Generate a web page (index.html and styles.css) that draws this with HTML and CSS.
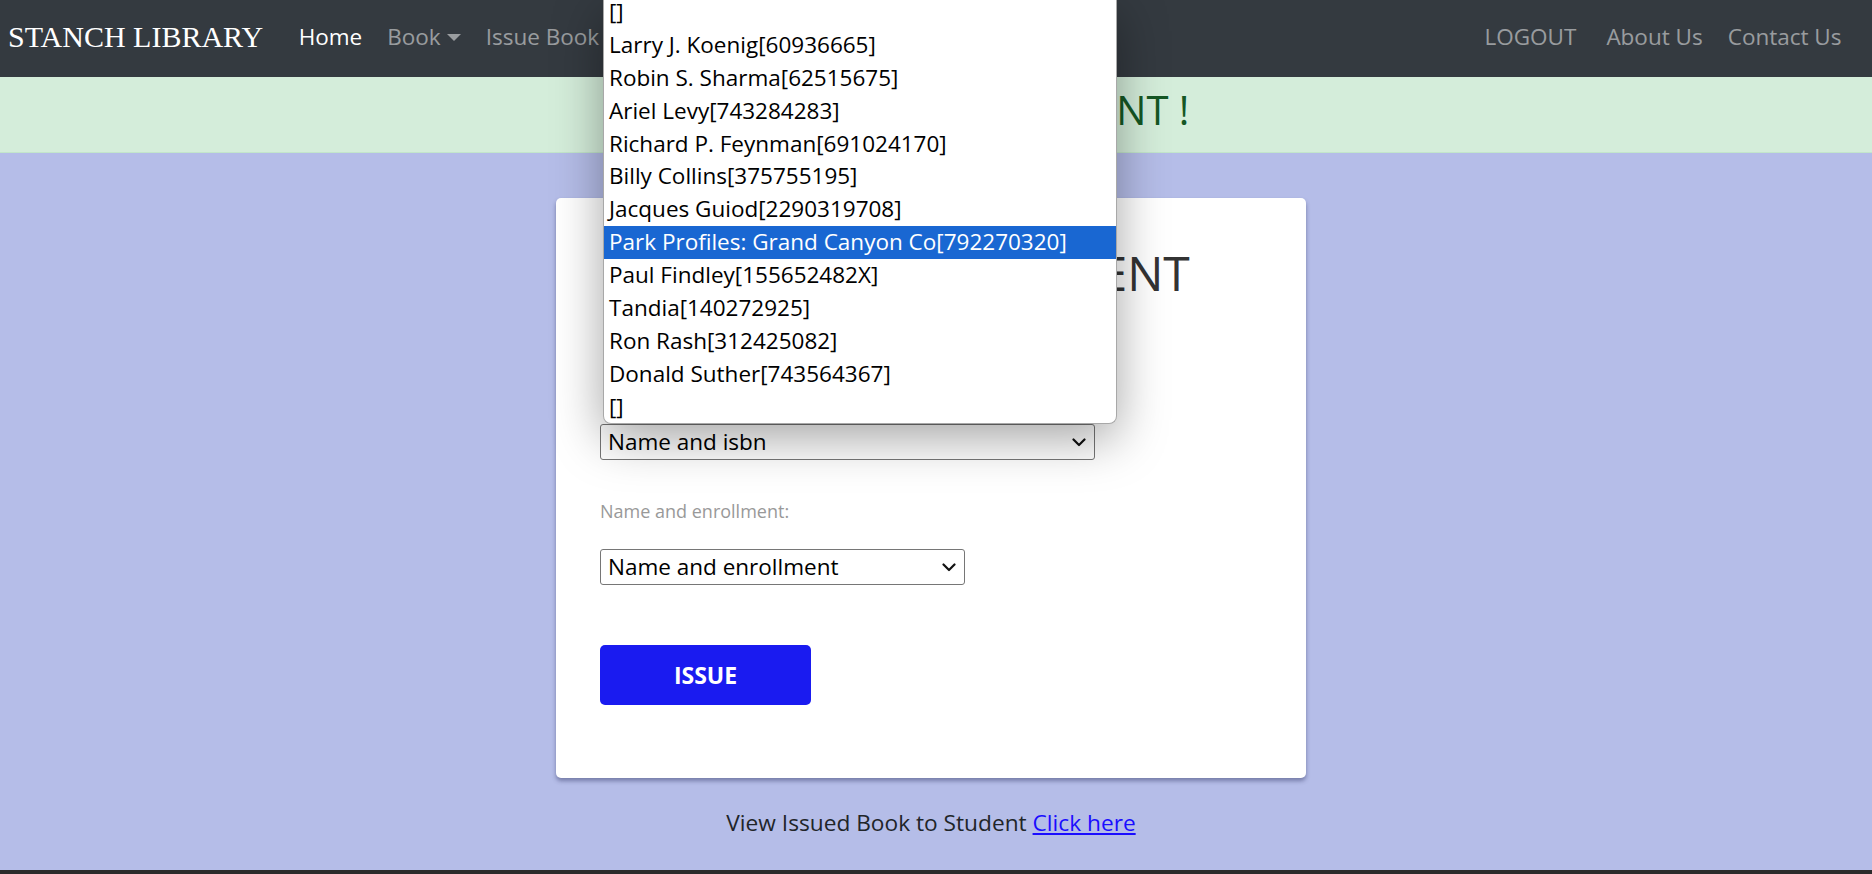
FILE: index.html
```html
<!DOCTYPE html>
<html lang="en">
<head>
<meta charset="utf-8">
<title>Issue Book to Student</title>
<link rel="stylesheet" href="styles.css">
</head>
<body>
<nav class="navbar">
  <a class="brand" href="#">STANCH LIBRARY</a>
  <ul class="nav nav-left">
    <li><a class="nav-link active" href="#">Home</a></li>
    <li><a class="nav-link" href="#">Book<span class="caret"></span></a></li>
    <li><a class="nav-link" href="#">Issue Book</a></li>
  </ul>
  <ul class="nav nav-right">
    <li><a class="nav-link logout" href="#">LOGOUT</a></li>
    <li><a class="nav-link" href="#">About Us</a></li>
    <li><a class="nav-link" href="#">Contact Us</a></li>
  </ul>
</nav>

<div class="banner">
  <h1 class="banner-title">ISSUE BOOK TO STUDENT !</h1>
</div>

<main class="main">
  <div class="card">
    <h2 class="card-title">ISSUE BOOK TO STUDENT</h2>
    <div class="form">
      <div class="select-wrap">
        <div class="select select-wide">
          <span class="select-text">Name and isbn</span>
          <svg class="chevron" width="14" height="9" viewBox="0 0 14 9"><path d="M1.5 1.5 L7 7 L12.5 1.5" fill="none" stroke="#111" stroke-width="2.2" stroke-linecap="round" stroke-linejoin="round"/></svg>
        </div>
        <div class="popup">
          <ul class="options">
            <li class="option">[]</li>
            <li class="option">Larry J. Koenig[60936665]</li>
            <li class="option">Robin S. Sharma[62515675]</li>
            <li class="option">Ariel Levy[743284283]</li>
            <li class="option">Richard P. Feynman[691024170]</li>
            <li class="option">Billy Collins[375755195]</li>
            <li class="option">Jacques Guiod[2290319708]</li>
            <li class="option selected">Park Profiles: Grand Canyon Co[792270320]</li>
            <li class="option">Paul Findley[155652482X]</li>
            <li class="option">Tandia[140272925]</li>
            <li class="option">Ron Rash[312425082]</li>
            <li class="option">Donald Suther[743564367]</li>
            <li class="option">[]</li>
          </ul>
        </div>
      </div>
      <label class="label">Name and enrollment:</label>
      <div class="select select-narrow">
        <span class="select-text">Name and enrollment</span>
        <svg class="chevron" width="14" height="9" viewBox="0 0 14 9"><path d="M1.5 1.5 L7 7 L12.5 1.5" fill="none" stroke="#111" stroke-width="2.2" stroke-linecap="round" stroke-linejoin="round"/></svg>
      </div>
      <button class="btn-issue" type="button">ISSUE</button>
    </div>
  </div>
  <p class="view-link">View Issued Book to Student <a href="#">Click here</a></p>
</main>
<div class="bottom-bar"></div>
</body>
</html>
```

FILE: styles.css
```css
* { box-sizing: border-box; }

html, body {
  margin: 0;
  padding: 0;
  overflow: hidden;
}

body {
  font-family: "Open Sans", "Noto Sans", sans-serif;
  color: #212529;
  background: #b5bde8;
}

/* NAVBAR */
.navbar {
  height: 77px;
  background: #343a40;
  display: flex;
  align-items: center;
  padding: 0 18px 4px 8px;
}

.brand {
  font-family: "Liberation Serif", "Times New Roman", serif;
  font-size: 30px;
  color: #fff;
  text-decoration: none;
  margin-right: 23px;
  line-height: 1;
}

.nav {
  list-style: none;
  margin: 0;
  padding: 0;
  display: flex;
  align-items: center;
}

.nav-right {
  margin-left: auto;
}

.nav-link {
  display: block;
  font-size: 22.5px;
  line-height: 1.5;
  padding: 0 12.5px;
  color: rgba(255, 255, 255, 0.5);
  text-decoration: none;
}

.nav-link.active {
  color: #fff;
}

.nav-link.logout {
  margin-right: 5px;
}

.caret {
  display: inline-block;
  margin-left: 6px;
  vertical-align: 4px;
  border-top: 7px solid rgba(255, 255, 255, 0.5);
  border-left: 7px solid transparent;
  border-right: 7px solid transparent;
}

/* BANNER */
.banner {
  height: 76px;
  background: #d4edda;
  border-bottom: 1px solid #c3e6cb;
  padding: 9px 0 0 6px;
}

.banner-title {
  margin: 0;
  text-align: center;
  font-size: 40px;
  line-height: 48px;
  font-weight: 400;
  color: #155724;
}

/* MAIN */
.main {
  height: 717px;
  padding: 45px 10px 0 0;
}

.card {
  width: 750px;
  margin: 0 auto;
  background: #fff;
  border-radius: 5px;
  box-shadow: 0 3px 4px rgba(40, 45, 90, 0.45);
  padding: 46px 44px 73px;
}

.card-title {
  margin: 0;
  font-size: 48px;
  line-height: 58px;
  font-weight: 500;
  color: #333;
  padding-left: 14px;
}

.form {
  display: flex;
  flex-direction: column;
  align-items: flex-start;
}

.label {
  display: block;
  margin-top: 37.5px;
  font-size: 18px;
  line-height: 27px;
  color: #999;
}

.select-wrap {
  position: relative;
  margin-top: 122px;
}

.select {
  height: 36px;
  border: 1px solid #767676;
  border-radius: 3px;
  background: #fff;
  display: flex;
  align-items: center;
  justify-content: space-between;
  padding: 0 8px 0 7px;
  font-size: 22.5px;
  color: #000;
}

.select-wide { width: 495px; }
.select-narrow { width: 365px; margin-top: 24.5px; }

.select-text {
  line-height: 1;
}

.chevron {
  display: block;
}

/* DROPDOWN POPUP */
.popup {
  position: absolute;
  left: 3px;
  bottom: 100%;
  width: 514px;
  height: 424px;
  background: #fff;
  border: 1px solid #a8a8a8;
  border-top: none;
  border-radius: 0 0 8px 8px;
  overflow: hidden;
  box-shadow: 0 14px 50px rgba(0, 0, 0, 0.36);
  z-index: 10;
}

.options {
  list-style: none;
  margin: -4px 0 0;
  padding: 0;
}

.option {
  height: 32.9px;
  line-height: 32.9px;
  padding-left: 5px;
  font-size: 22.5px;
  color: #000;
  white-space: nowrap;
}

.option.selected {
  background: #1967d2;
  color: #fff;
}

.btn-issue {
  margin-top: 60px;
  width: 211px;
  height: 60px;
  border: none;
  border-radius: 5px;
  background: #1a1bf0;
  color: #fff;
  font-family: "Open Sans", "Noto Sans", sans-serif;
  font-weight: 700;
  font-size: 23px;
}

.view-link {
  margin: 28px 0 0;
  text-align: center;
  font-size: 22.7px;
  line-height: 34px;
  color: #212529;
}

.view-link a {
  color: #1a0dff;
}

.bottom-bar {
  height: 4px;
  background: #2b2b2b;
}
```
